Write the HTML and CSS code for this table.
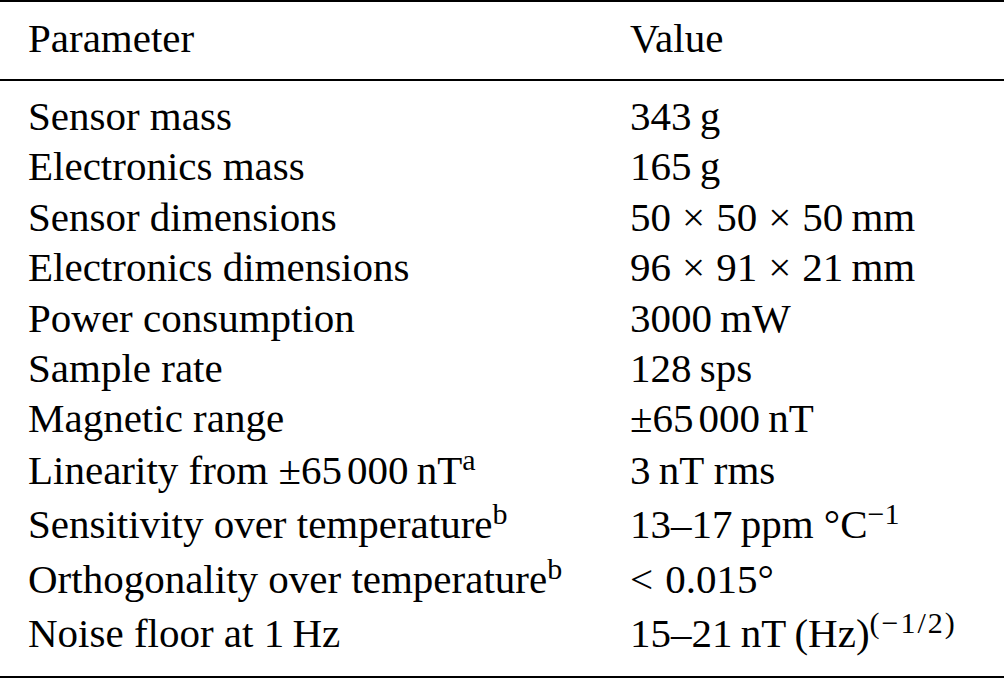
FILE: index.html
```html
<!DOCTYPE html>
<html lang="en">
<head>
<meta charset="utf-8">
<title>Parameter table</title>
<link rel="stylesheet" href="styles.css">
</head>
<body>
<div class="table">
  <div class="head">
    <div class="cell">Parameter</div>
    <div class="cell val">Value</div>
  </div>
  <div class="body">
    <div class="cell">Sensor mass</div>
    <div class="cell val">343&thinsp;g</div>
    <div class="cell">Electronics mass</div>
    <div class="cell val">165&thinsp;g</div>
    <div class="cell">Sensor dimensions</div>
    <div class="cell val">50<span class="op">×</span>50<span class="op">×</span>50&thinsp;mm</div>
    <div class="cell">Electronics dimensions</div>
    <div class="cell val">96<span class="op">×</span>91<span class="op">×</span>21&thinsp;mm</div>
    <div class="cell">Power consumption</div>
    <div class="cell val">3000&thinsp;mW</div>
    <div class="cell">Sample rate</div>
    <div class="cell val">128&thinsp;sps</div>
    <div class="cell">Magnetic range</div>
    <div class="cell val">±65<span class="th"></span>000&thinsp;nT</div>
    <div class="cell">Linearity from ±65<span class="th"></span>000&thinsp;nT<sup>a</sup></div>
    <div class="cell val">3&thinsp;nT rms</div>
    <div class="cell">Sensitivity over temperature<sup>b</sup></div>
    <div class="cell val">13–17&thinsp;ppm °C<sup>−1</sup></div>
    <div class="cell">Orthogonality over temperature<sup>b</sup></div>
    <div class="cell val"><span class="lt">&lt;</span>0.015°</div>
    <div class="cell">Noise floor at 1&thinsp;Hz</div>
    <div class="cell val">15–21&thinsp;nT&thinsp;(Hz)<sup class="wide">(−1/2)</sup></div>
  </div>
</div>
</body>
</html>
```
FILE: styles.css
```css
html, body {
  margin: 0;
  padding: 0;
  background: #ffffff;
}

body {
  width: 1004px;
  height: 678px;
  overflow: hidden;
  font-family: "Liberation Serif", "Times New Roman", serif;
  font-size: 41px;
  color: #000000;
}

.table {
  border-top: 2px solid #000;
  border-bottom: 2px solid #000;
  height: 678px;
  box-sizing: border-box;
}

.head,
.body {
  display: grid;
  grid-template-columns: 602px 1fr;
  padding-left: 28px;
  line-height: 50.4px;
}

.head {
  padding-top: 11px;
  padding-bottom: 15.6px;
  border-bottom: 2px solid #000;
}

.body {
  padding-top: 10px;
  grid-template-rows: repeat(6, 50.4px) 51.6px 54px 55px 54px 50.4px;
}

.cell {
  white-space: nowrap;
}

.op {
  padding: 0 11px;
}

.th {
  display: inline-block;
  width: 5px;
}

.lt {
  padding-right: 12px;
}

sup {
  font-size: 30px;
  line-height: 0;
  vertical-align: baseline;
  position: relative;
  top: -14px;
}

.wide {
  letter-spacing: 2px;
}
```
